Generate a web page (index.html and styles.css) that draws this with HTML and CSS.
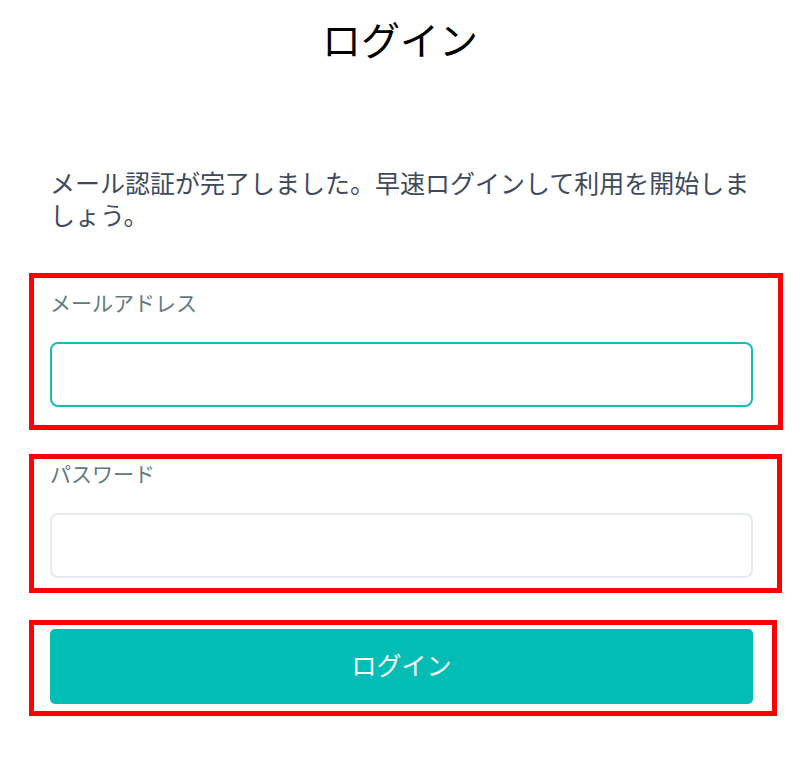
FILE: index.html
```html
<!DOCTYPE html>
<html lang="ja">
  <head>
    <meta charset="UTF-8" />
    <meta name="viewport" content="width=device-width, initial-scale=1.0" />
    <title>ログイン</title>
    <link rel="stylesheet" href="styles.css">
  </head>
  <body>
    <h1 class="page-title">ログイン</h1>

    <p class="lead">メール認証が完了しました。早速ログインして利用を開始しましょう。</p>

    <form class="login-form">
      <!-- Email -->
      <div class="field-box field-email">
        <label class="field-label" for="email">メールアドレス</label>
        <input class="field-input is-focused" id="email" type="email">
      </div>

      <!-- Password -->
      <div class="field-box field-password">
        <label class="field-label" for="password">パスワード</label>
        <input class="field-input" id="password" type="password">
      </div>

      <!-- Submit -->
      <div class="field-box field-submit">
        <button class="login-button" type="button">ログイン</button>
      </div>
    </form>
  </body>
</html>
```

FILE: styles.css
```css
body {
  margin: 0;
  padding: 0;
  background-color: #fff;
  font-family: "Noto Sans CJK JP", "Noto Sans", sans-serif;
}

.page-title {
  margin: 0;
  padding-top: 15px;
  font-size: 39px;
  line-height: 46px;
  font-weight: 400;
  color: #000;
  text-align: center;
}

.lead {
  margin: 105px 0 0 50px;
  width: 703px;
  font-size: 25px;
  line-height: 32px;
  color: #3f4a5d;
}

.login-form {
  display: flex;
  flex-direction: column;
  margin-top: 43px;
  padding-left: 29px;
}

.field-box {
  display: flex;
  flex-direction: column;
  box-sizing: border-box;
  border: 5px solid #ff0000;
  padding-left: 16px;
}

.field-email {
  width: 754px;
  padding-top: 10px;
  padding-right: 25px;
  padding-bottom: 18px;
}

.field-password {
  width: 753px;
  margin-top: 24px;
  padding-top: 0;
  padding-right: 24px;
  padding-bottom: 10px;
}

.field-submit {
  width: 748px;
  margin-top: 27px;
  padding-top: 4px;
  padding-right: 19px;
  padding-bottom: 7px;
}

.field-label {
  font-size: 21px;
  line-height: 28px;
  color: #5f7a80;
}

.field-input {
  box-sizing: border-box;
  margin-top: 26px;
  width: 100%;
  height: 65px;
  border: 2px solid #e5eaf1;
  border-radius: 8px;
  background-color: #fff;
  outline: none;
}

.field-input.is-focused {
  border-color: #16bdb4;
}

.login-button {
  width: 100%;
  height: 75px;
  padding: 0 0 5px;
  border: none;
  border-radius: 5px;
  background-color: #02bdb5;
  color: #fff;
  font-family: inherit;
  font-size: 25px;
  cursor: pointer;
}
```
